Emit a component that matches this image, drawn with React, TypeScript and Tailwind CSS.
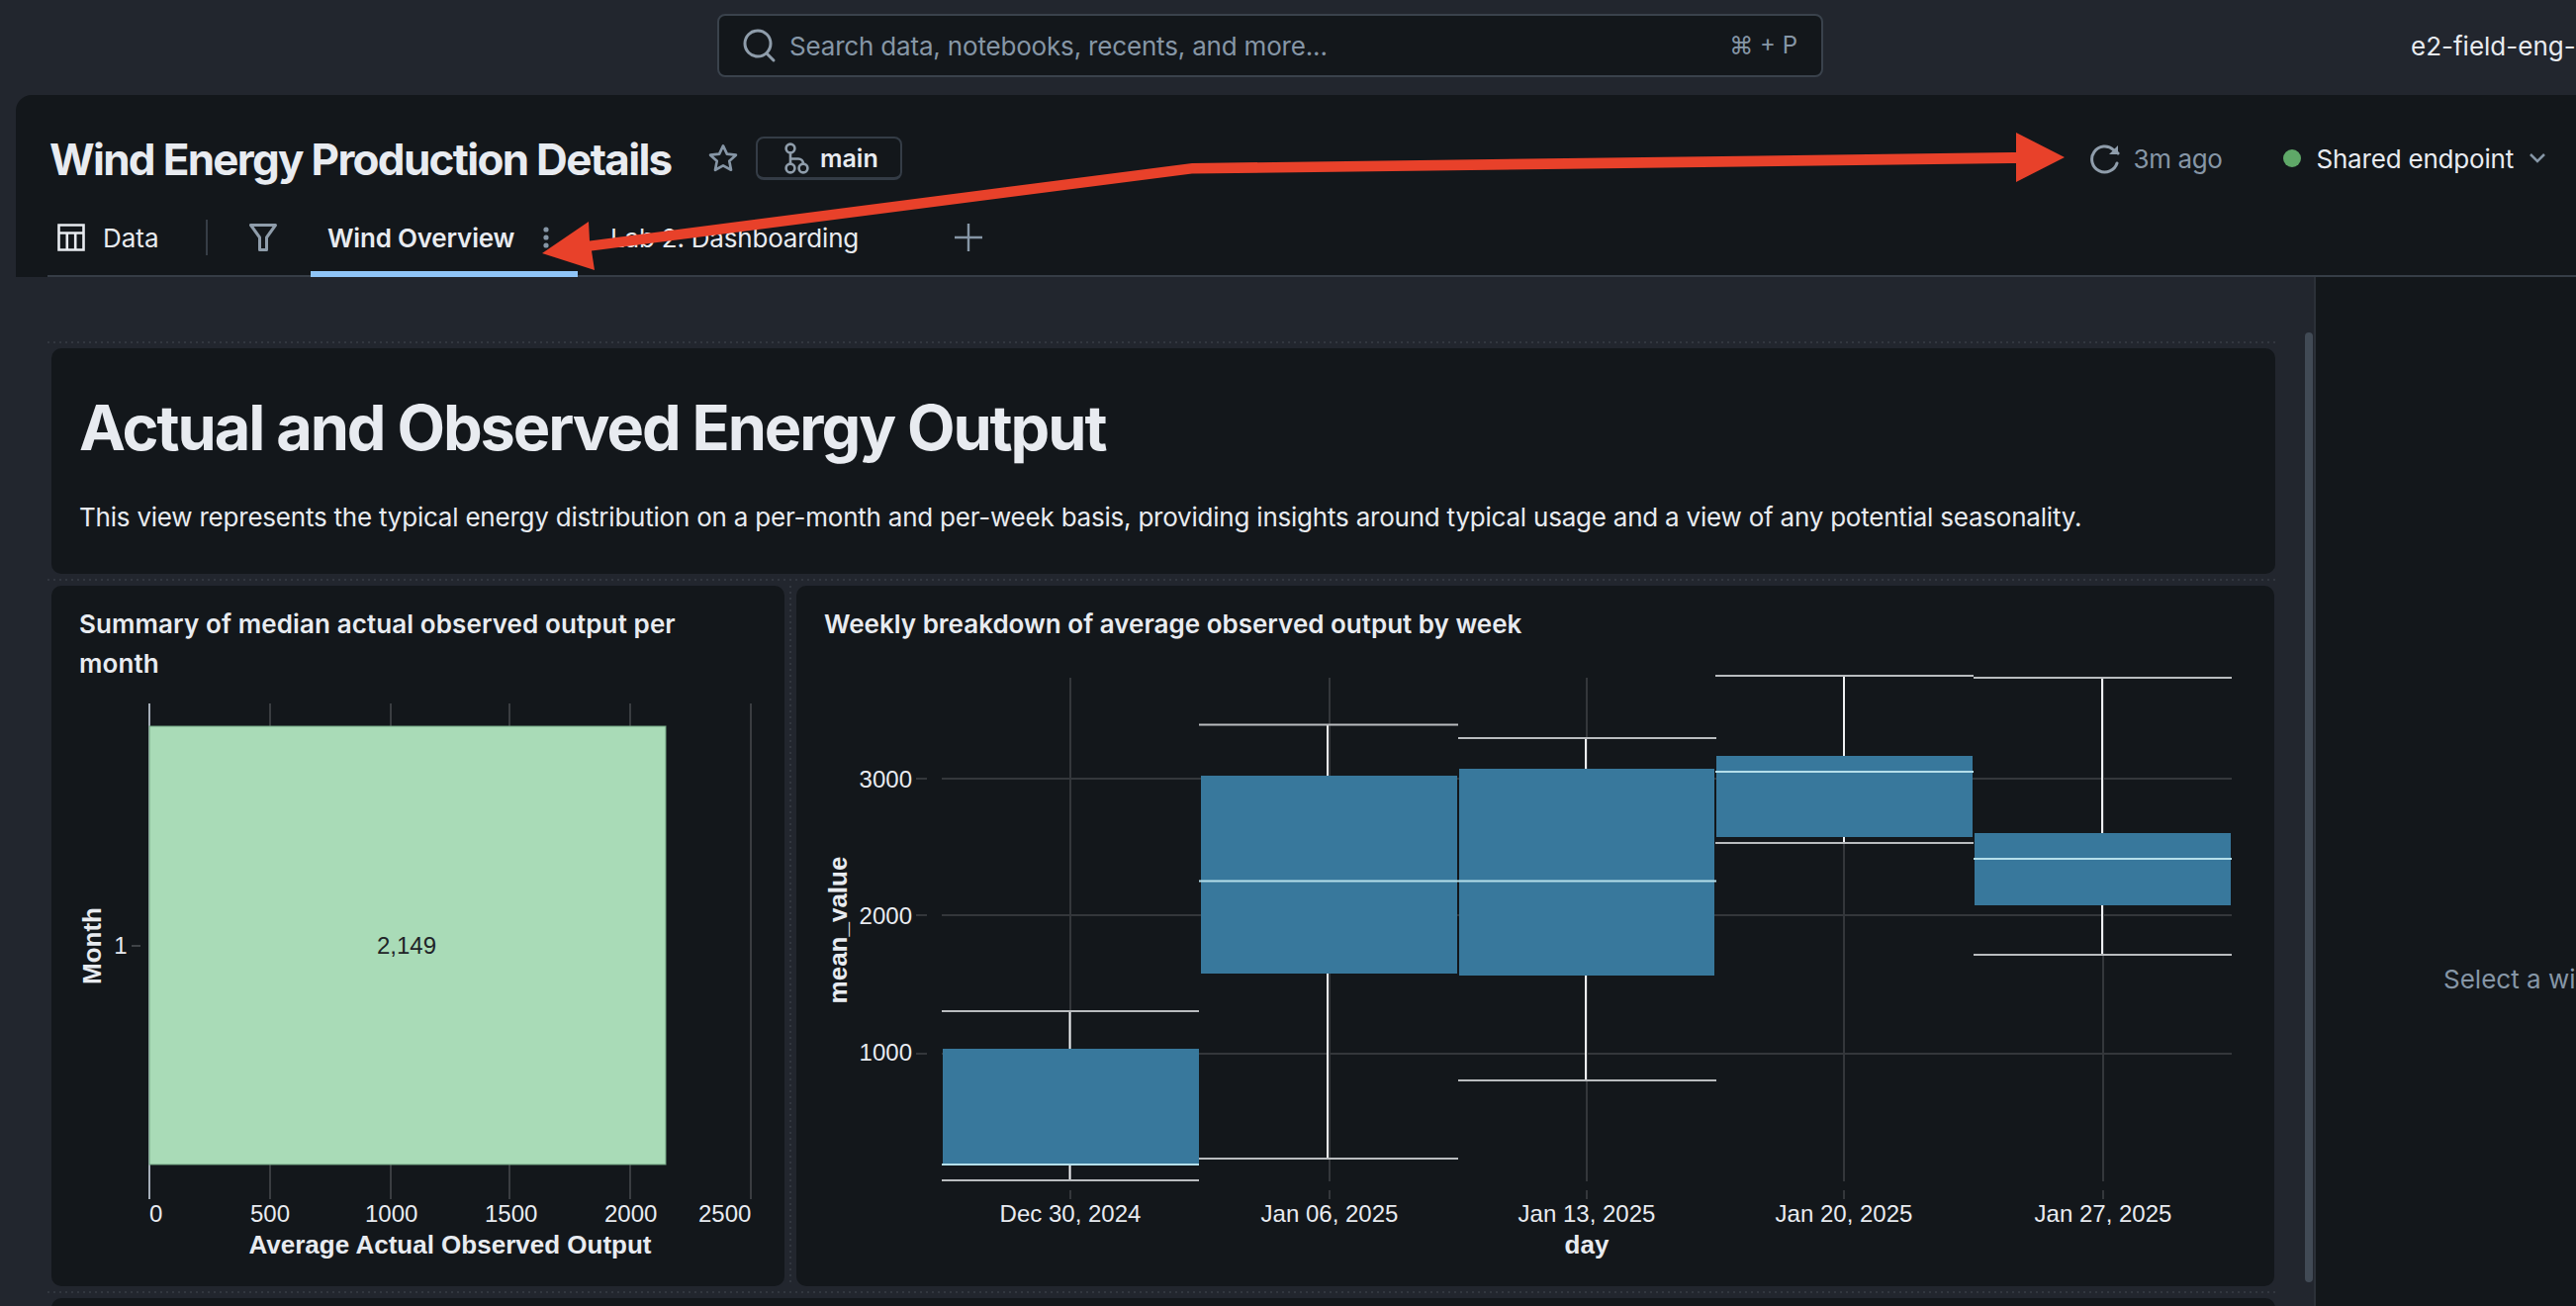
const gridX = [273, 395, 515, 637, 759];
const heatLabels = [
  { x: 151, t: '0' },
  { x: 253, t: '500' },
  { x: 369, t: '1000' },
  { x: 490, t: '1500' },
  { x: 611, t: '2000' },
  { x: 706, t: '2500' },
];

const boxes = [
  { x1: 953, x2: 1212, top: 1060, bottom: 1177, median: 1177, hi: 1022, lo: 1193, capL: 952, capR: 1212, wx: 1081.5 },
  { x1: 1214, x2: 1473, top: 784, bottom: 984, median: 890.5, hi: 732.5, lo: 1171, capL: 1212, capR: 1474, wx: 1342 },
  { x1: 1475, x2: 1733, top: 777, bottom: 986, median: 890.5, hi: 746, lo: 1092, capL: 1474, capR: 1735, wx: 1603 },
  { x1: 1735, x2: 1994, top: 764, bottom: 846, median: 780, hi: 683, lo: 852, capL: 1734, capR: 1995, wx: 1864 },
  { x1: 1996, x2: 2255, top: 842, bottom: 915, median: 868, hi: 685, lo: 965, capL: 1995, capR: 2256, wx: 2125 },
];
const weeks = [
  { x: 1082, t: 'Dec 30, 2024' },
  { x: 1344, t: 'Jan 06, 2025' },
  { x: 1604, t: 'Jan 13, 2025' },
  { x: 1864, t: 'Jan 20, 2025' },
  { x: 2126, t: 'Jan 27, 2025' },
];
const yTicks = [
  { y: 787, t: '3000', label: 796 },
  { y: 925, t: '2000', label: 934 },
  { y: 1065, t: '1000', label: 1072 },
];

const chartFont = { fontFamily: '"Liberation Sans", Arial, sans-serif' };

function DottedRow() {
  return (
    <div className="h-[12px] flex items-center -ml-[4px] -mr-[4px]">
      <div className="h-[2px] w-full opacity-40 bg-[repeating-linear-gradient(90deg,#4a5059_0,#4a5059_2px,transparent_2px,transparent_6px)]" />
    </div>
  );
}

function HeatmapChart() {
  return (
    <svg viewBox="52 680 741 620" className="w-[741px] h-[620px] block" style={chartFont}>
      {gridX.map((x) => (
        <line key={x} x1={x} x2={x} y1={711} y2={1212} stroke="#3a3d41" strokeWidth="2" />
      ))}
      <line x1={151} x2={151} y1={711} y2={1212} stroke="#a5adb8" strokeWidth="2" />
      <rect x={151} y={734} width={522} height={443} fill="#a9dbb7" stroke="#6f9f7e" strokeWidth="1" />
      <text x={411} y={964} textAnchor="middle" fontSize="24" fill="#1f2428">2,149</text>
      <line x1={133} x2={142} y1={956} y2={956} stroke="#3f4347" strokeWidth="2" />
      <text x={122} y={964} textAnchor="middle" fontSize="24" fill="#e8ebf0">1</text>
      <text transform="translate(102 956) rotate(-90)" textAnchor="middle" fontSize="26" fontWeight="700" fill="#e8ebf0">Month</text>
      {heatLabels.map((l) => (
        <text key={l.t} x={l.x} y={1235} fontSize="24" fill="#e8ebf0">{l.t}</text>
      ))}
      <text x={455} y={1267} textAnchor="middle" fontSize="26" fontWeight="700" fill="#e8ebf0">Average Actual Observed Output</text>
    </svg>
  );
}

function BoxChart() {
  return (
    <svg viewBox="805 680 1494 620" className="w-[1494px] h-[620px] block" style={chartFont}>
      {weeks.map((w) => (
        <g key={w.t}>
          <line x1={w.x} x2={w.x} y1={685} y2={1194} stroke="#34373b" strokeWidth="2" />
          <line x1={w.x} x2={w.x} y1={1203} y2={1212} stroke="#34373b" strokeWidth="2" />
          <text x={w.x} y={1235} textAnchor="middle" fontSize="24" fill="#e8ebf0">{w.t}</text>
        </g>
      ))}
      {yTicks.map((t) => (
        <g key={t.t}>
          <line x1={952} x2={2256} y1={t.y} y2={t.y} stroke="#34373b" strokeWidth="2" />
          <line x1={926} x2={937} y1={t.y} y2={t.y} stroke="#34373b" strokeWidth="2" />
          <text x={922} y={t.label} textAnchor="end" fontSize="24" fill="#e8ebf0">{t.t}</text>
        </g>
      ))}
      {boxes.map((b) => (
        <g key={b.x1}>
          <line x1={b.wx} x2={b.wx} y1={b.hi} y2={b.lo} stroke="#eef0f2" strokeWidth="2" />
          <line x1={b.capL} x2={b.capR} y1={b.hi} y2={b.hi} stroke="#b9bcbf" strokeWidth="2" />
          <line x1={b.capL} x2={b.capR} y1={b.lo} y2={b.lo} stroke="#b9bcbf" strokeWidth="2" />
          <rect x={b.x1} y={b.top} width={b.x2 - b.x1} height={b.bottom - b.top} fill="#38789c" />
          <line x1={b.capL} x2={b.capR} y1={b.median} y2={b.median} stroke="#b5dfea" strokeWidth="2" />
        </g>
      ))}
      <text transform="translate(856 940) rotate(-90)" textAnchor="middle" fontSize="26" fontWeight="700" fill="#e8ebf0">mean_value</text>
      <text x={1604} y={1267} textAnchor="middle" fontSize="26" fontWeight="700" fill="#e8ebf0">day</text>
    </svg>
  );
}

export default function App() {
  return (
    <div className="relative w-[2604px] h-[1320px] overflow-hidden flex flex-col bg-[#22262e] text-[#e8ebf0] font-['Inter',sans-serif]">
      {/* top bar */}
      <div className="h-[96px] shrink-0 flex items-start">
        <div className="ml-[725px] mt-[14px] w-[1118px] shrink-0 h-[64px] flex items-center rounded-[8px] border-2 border-[#3a424c] bg-[#13171b] pl-[22px] pr-[24px]">
          <svg width="36" height="36" viewBox="0 0 36 36" fill="none" stroke="#8f9dab" strokeWidth="3" className="shrink-0">
            <circle cx="17" cy="16" r="13" />
            <path d="M26 26l7 7" strokeLinecap="round" />
          </svg>
          <span className="ml-[13px] text-[26px] tracking-[-0.18px] text-[#8696a6] whitespace-nowrap">Search data, notebooks, recents, and more...</span>
          <span className="ml-auto text-[24px] text-[#8696a6] whitespace-nowrap">⌘ + P</span>
        </div>
        <div className="ml-[594px] mt-[30px] shrink-0 text-[26px] leading-[34px] whitespace-nowrap">e2-field-eng-west</div>
      </div>

      {/* dashboard header */}
      <div className="ml-[16px] h-[184px] shrink-0 rounded-tl-[16px] bg-[#13171b] pt-[42px] flex flex-col">
        <div className="h-[44px] pl-[34px] pr-[30px] flex items-center">
          <h1 className="w-[630px] mt-[2px] text-[44px] leading-[44px] font-bold tracking-[-1.7px] whitespace-nowrap">Wind Energy Production Details</h1>
          <svg width="32" height="32" viewBox="0 0 24 24" fill="none" stroke="#8696a6" strokeWidth="2" strokeLinejoin="round" className="ml-[35px] shrink-0">
            <path d="M12 2.5l2.9 6.2 6.8.8-5 4.6 1.3 6.7-6-3.3-6 3.3 1.3-6.7-5-4.6 6.8-.8z" />
          </svg>
          <div className="ml-[17px] w-[148px] h-[44px] flex items-center rounded-[8px] border-2 border-[#343c46] border-b-[3px] pl-[26px]">
            <svg width="26" height="32" viewBox="0 0 26 32" fill="none" stroke="#8f9dab" strokeWidth="2.6" className="shrink-0">
              <circle cx="7" cy="6" r="4.4" />
              <circle cx="7" cy="26" r="4.4" />
              <circle cx="20" cy="26" r="4.4" />
              <path d="M7 10.5v11M7 16.5h8a5 5 0 0 1 5 5" />
            </svg>
            <span className="ml-[11px] text-[25px] leading-[32px] font-semibold">main</span>
          </div>
          <svg width="32" height="32" viewBox="0 0 32 32" fill="none" stroke="#8f9dab" strokeWidth="3" className="ml-auto shrink-0">
            <path d="M28 21a13 13 0 1 1-3.5-13.5L29 11" strokeLinecap="round" />
            <path d="M29 3v9h-9" fill="#8f9dab" stroke="none" />
          </svg>
          <span className="ml-[13px] text-[26px] tracking-[-0.4px] text-[#8696a6] whitespace-nowrap">3m ago</span>
          <span className="ml-[62px] w-[18px] h-[18px] rounded-full bg-[#5fa868] shrink-0" />
          <span className="ml-[15px] text-[26px] tracking-[-0.2px] whitespace-nowrap">Shared endpoint</span>
          <svg width="18" height="12" viewBox="0 0 18 12" fill="none" stroke="#8696a6" strokeWidth="2.5" className="ml-[15px] shrink-0">
            <path d="M2 2l7 7 7-7" />
          </svg>
        </div>
        <div className="mt-auto ml-[32px] h-[58px] pb-[20px] border-b-2 border-[#363d46] flex items-center text-[26px]">
          <svg width="28" height="28" viewBox="0 0 28 28" fill="none" stroke="#e8ebf0" strokeWidth="2.6" className="ml-[10px] shrink-0">
            <path d="M1.5 1.5h25v25h-25zM1.5 9.5h25M9.8 9.5v17M18.2 9.5v17" />
          </svg>
          <span className="ml-[18px] w-[56px] whitespace-nowrap">Data</span>
          <span className="ml-[48px] w-[2px] h-[36px] bg-[#363d46] shrink-0" />
          <svg width="28" height="28" viewBox="0 0 28 28" fill="none" stroke="#8f9dab" strokeWidth="3" className="ml-[42px] shrink-0">
            <path d="M1.5 1.5h25L17.5 14v12.5h-7V14z" strokeLinejoin="round" />
          </svg>
          <div className="relative ml-[34px] w-[270px] h-full pl-[17px] flex items-center">
            <span className="w-[189px] font-semibold whitespace-nowrap tracking-[-0.2px]">Wind Overview</span>
            <svg width="8" height="22" viewBox="0 0 8 22" fill="#8696a6" className="ml-[28px] shrink-0">
              <circle cx="4" cy="3" r="2.6" />
              <circle cx="4" cy="11" r="2.6" />
              <circle cx="4" cy="19" r="2.6" />
            </svg>
            <span className="absolute left-0 right-0 -bottom-[22px] h-[6px] bg-[#8fc5f8]" />
          </div>
          <span className="ml-[33px] w-[250px] tracking-[-0.2px] whitespace-nowrap">Lab 2: Dashboarding</span>
          <svg width="28" height="28" viewBox="0 0 28 28" fill="none" stroke="#8696a6" strokeWidth="2.4" className="ml-[98px] shrink-0">
            <path d="M14 0v28M0 14h28" />
          </svg>
        </div>
      </div>

      {/* canvas + side panel */}
      <div className="flex-1 min-h-0 flex">
        <div className="relative w-[2339px] shrink-0 overflow-hidden pl-[52px] pr-[39px] pt-[60px]">
          <DottedRow />
          <div className="h-[228px] rounded-[10px] bg-[#13171b] pl-[28px] pt-[42px]">
            <h2 className="text-[63px] leading-[76px] font-bold tracking-[-2.05px] whitespace-nowrap">Actual and Observed Energy Output</h2>
            <p className="mt-[33px] text-[26px] leading-[40px] tracking-[-0.22px] whitespace-nowrap">This view represents the typical energy distribution on a per-month and per-week basis, providing insights around typical usage and a view of any potential seasonality.</p>
          </div>
          <DottedRow />
          <div className="flex h-[708px]">
            <div className="w-[741px] shrink-0 rounded-[10px] bg-[#13171b]">
              <h3 className="h-[88px] pl-[28px] pt-[19px] text-[26px] leading-[40px] font-semibold tracking-[0.1px]">Summary of median actual observed output per<br />month</h3>
              <HeatmapChart />
            </div>
            <div className="w-[12px] shrink-0 flex justify-center">
              <div className="w-[2px] h-full opacity-40 bg-[repeating-linear-gradient(180deg,#4a5059_0,#4a5059_2px,transparent_2px,transparent_6px)]" />
            </div>
            <div className="w-[1494px] shrink-0 rounded-[10px] bg-[#13171b]">
              <h3 className="h-[88px] pl-[28px] pt-[19px] text-[26px] leading-[40px] font-semibold">Weekly breakdown of average observed output by week</h3>
              <BoxChart />
            </div>
          </div>
          <DottedRow />
          <div className="h-[200px] rounded-[10px] bg-[#13171b]" />
          {/* scrollbar */}
          <div className="absolute right-[1px] top-[56px] bottom-[24px] w-[8px] rounded-full bg-[#414a55]" />
        </div>
        <div className="flex-1 min-w-0 overflow-hidden bg-[#13171b] border-l-2 border-[#2b3038] pl-[129px] pt-[693px]">
          <span className="text-[26px] leading-[34px] text-[#8696a6] whitespace-nowrap">Select a widget to edit</span>
        </div>
      </div>

      {/* annotation arrows */}
      <svg className="absolute inset-0 pointer-events-none" width="2604" height="1320" viewBox="0 0 2604 1320" fill="#e8412a">
        <path d="M1205 165L2038 154V134L2087 159L2038 184V165L1205 175.5L598 253.5L601 273L548 256L595 224L596 243.5Z" />
      </svg>
    </div>
  );
}
